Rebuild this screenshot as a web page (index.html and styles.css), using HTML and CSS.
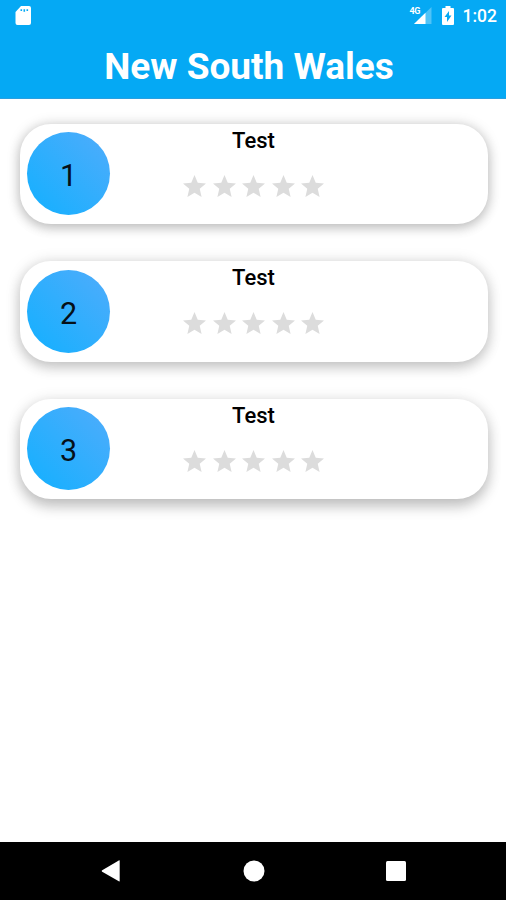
FILE: index.html
```html
<!DOCTYPE html>
<html lang="en">
<head>
<meta charset="utf-8">
<title>New South Wales</title>
<link rel="stylesheet" href="styles.css">
</head>
<body>
<header class="header">
  <div class="status">
    <svg class="sd" width="16" height="20" viewBox="0 0 16 20"><path fill="#fff" fill-rule="evenodd" d="M6 0h8q2 0 2 2v15q0 2-2 2H2.500q-2 0-2-2V6zM5.500 3.200v1.800h1.600V3.200zm3 0v2.600h1.600V3.200zm3 0v1.800h1.600V3.200z"/></svg>
    <div class="indicators">
      <div class="signal">
        <span class="network">4G</span>
        <svg width="18" height="17" viewBox="0 0 18 17"><path fill="#fff" opacity=".3" d="M17.500 0v17H0z"/><path fill="#fff" d="M11.500 5.800V17H0z"/></svg>
      </div>
      <svg class="battery" width="12" height="19" viewBox="0 0 12 19"><path fill="#fff" fill-rule="evenodd" d="M3.500 0h5v2H11q1 0 1 1v15q0 1-1 1H1q-1 0-1-1V3q0-1 1-1h2.500zM7 5l-4.500 6H5v5l4.500-6.500H7z"/></svg>
      <span class="clock">1:02</span>
    </div>
  </div>
  <h1 class="title">New South Wales</h1>
</header>
<svg class="defs" width="0" height="0"><symbol id="star" viewBox="2 2 20 19"><path d="M12 17.270 18.180 21l-1.640-7.030L22 9.240l-7.190-.61L12 2 9.190 8.630 2 9.240l5.460 4.730L5.820 21z"/></symbol></svg>
<main class="list">
  <article class="card">
    <div class="rank">1</div>
    <div class="details"><h2 class="name">Test</h2><div class="stars"><svg><use href="#star"/></svg><svg><use href="#star"/></svg><svg><use href="#star"/></svg><svg><use href="#star"/></svg><svg><use href="#star"/></svg></div></div>
  </article>
  <article class="card">
    <div class="rank">2</div>
    <div class="details"><h2 class="name">Test</h2><div class="stars"><svg><use href="#star"/></svg><svg><use href="#star"/></svg><svg><use href="#star"/></svg><svg><use href="#star"/></svg><svg><use href="#star"/></svg></div></div>
  </article>
  <article class="card">
    <div class="rank">3</div>
    <div class="details"><h2 class="name">Test</h2><div class="stars"><svg><use href="#star"/></svg><svg><use href="#star"/></svg><svg><use href="#star"/></svg><svg><use href="#star"/></svg><svg><use href="#star"/></svg></div></div>
  </article>
</main>
<nav class="navbar">
  <svg width="20" height="22" viewBox="0 0 20 22"><path fill="#fff" d="M18.700.800V20.800Q18.700 21.700 17.800 21.200L1.200 11.800Q0 11 1.200 10.200L17.800.500Q18.700 0 18.700.800z"/></svg>
  <svg width="22" height="22" viewBox="0 0 22 22"><circle cx="11" cy="11" r="10.500" fill="#fff"/></svg>
  <svg width="20" height="20" viewBox="0 0 20 20"><rect width="20" height="20" rx="1.500" fill="#fff"/></svg>
</nav>
</body>
</html>
```
FILE: styles.css
```css
* {
  box-sizing: border-box;
}

body {
  margin: 0;
  height: 900px;
  display: flex;
  flex-direction: column;
  overflow: hidden;
  background: #fff;
  color: #000;
  font-family: Roboto, sans-serif;
}

svg {
  display: block;
}

.defs {
  position: absolute;
}

.header {
  height: 99px;
  background: #05a9f4;
  border-bottom: 1px solid #2a9fdf;
  color: #fff;
}

.status {
  display: flex;
  justify-content: space-between;
  align-items: flex-start;
  height: 32px;
  padding: 6px 9px 0 15px;
}

.indicators {
  display: flex;
}

.signal {
  position: relative;
  padding-top: 1px;
}

.network {
  position: absolute;
  left: -4px;
  top: 0;
  font-size: 9px;
  line-height: 10px;
  font-weight: 700;
  letter-spacing: -0.5px;
}

.battery {
  margin-left: 10px;
}

.clock {
  margin-left: 9px;
  font-size: 17.5px;
  line-height: 21px;
  font-weight: 500;
}

.title {
  margin: 12px 0 0;
  padding-right: 8px;
  text-align: center;
  font-size: 37px;
  line-height: 46px;
  font-weight: 700;
}

.list {
  flex: 1;
  display: flex;
  flex-direction: column;
  gap: 37.5px;
  padding: 24.5px 18px 0 19.5px;
}

.card {
  display: grid;
  grid-template-columns: 83px 1fr 83px;
  height: 100.5px;
  margin-bottom: -0.5px;
  padding: 0 8px 0 7.5px;
  border-radius: 31px;
  background: #fff;
  box-shadow: 0 6px 13px rgba(0, 0, 0, 0.16), 0 1px 15px rgba(0, 0, 0, 0.15);
}

.card:first-child {
  box-shadow: 0 4px 12px rgba(0, 0, 0, 0.16), 0 1px 14px rgba(0, 0, 0, 0.18);
}

.card:last-child {
  box-shadow: 0 8px 14px rgba(0, 0, 0, 0.2), 0 1px 15px rgba(0, 0, 0, 0.12);
}

.rank {
  width: 83px;
  height: 83px;
  margin-top: 8.5px;
  border-radius: 50%;
  background: linear-gradient(45deg, #12b0ff, #50acfb);
  text-align: center;
  font-size: 30.5px;
  color: #061018;
  line-height: 87px;
}

.details {
  display: flex;
  flex-direction: column;
  align-items: center;
}

.name {
  margin: 4px 0 0;
  font-size: 22px;
  line-height: 26px;
  font-weight: 500;
}

.stars {
  display: flex;
  gap: 6.500px;
  margin-top: 21px;
}

.stars svg {
  width: 23px;
  height: 22px;
  fill: #dcdcdc;
}

.navbar {
  display: flex;
  justify-content: space-between;
  align-items: center;
  height: 58px;
  padding: 0 100px 0 101px;
  background: #000;
}
```
